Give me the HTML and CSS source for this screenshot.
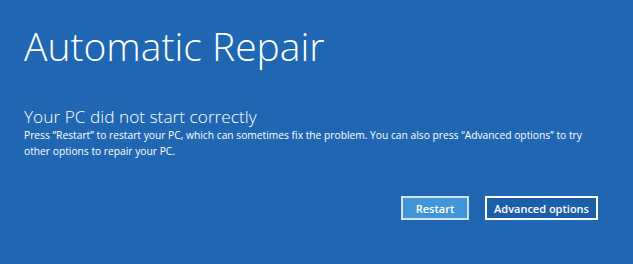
FILE: index.html
```html
<!DOCTYPE html>
<html lang="en">
<head>
<meta charset="utf-8">
<title>Automatic Repair</title>
<link rel="stylesheet" href="styles.css">
</head>
<body>
<main class="screen">
  <h1 class="title">Automatic Repair</h1>
  <h2 class="subtitle">Your PC did not start correctly</h2>
  <p class="message">Press “Restart” to restart your PC, which can sometimes fix the problem. You can also press “Advanced options” to try other options to repair your PC.</p>
  <div class="actions">
    <button class="btn btn-primary" type="button">Restart</button>
    <button class="btn btn-secondary" type="button">Advanced options</button>
  </div>
</main>
</body>
</html>
```
FILE: styles.css
```css
html, body {
  margin: 0;
  padding: 0;
  height: 100%;
}
body {
  background: #1f67b3;
  color: #ffffff;
  font-family: "Open Sans", "Noto Sans", sans-serif;
}
.screen {
  padding: 23px 35px 0 24px;
  display: flex;
  flex-direction: column;
}
.title {
  margin: 0;
  font-weight: 300;
  font-size: 39px;
  line-height: 46px;
}
.subtitle {
  margin: 37px 0 0 0;
  font-weight: 300;
  font-size: 17.3px;
  line-height: 21px;
}
.message {
  margin: 0;
  width: 566px;
  font-size: 10.25px;
  line-height: 16px;
}
.actions {
  margin-top: 37px;
  display: flex;
  justify-content: flex-end;
  gap: 16px;
}
.btn {
  font-family: "Open Sans", "Noto Sans", sans-serif;
  font-weight: 600;
  font-size: 11px;
  color: #ffffff;
  height: 24px;
  padding: 0;
  border: 2px solid #ffffff;
  margin: 0;
  white-space: nowrap;
}
.btn-primary {
  width: 68px;
  background: #3f95d6;
  border-color: #cfe3f4;
}
.btn-secondary {
  width: 113px;
  background: #1d5ea9;
}
```
